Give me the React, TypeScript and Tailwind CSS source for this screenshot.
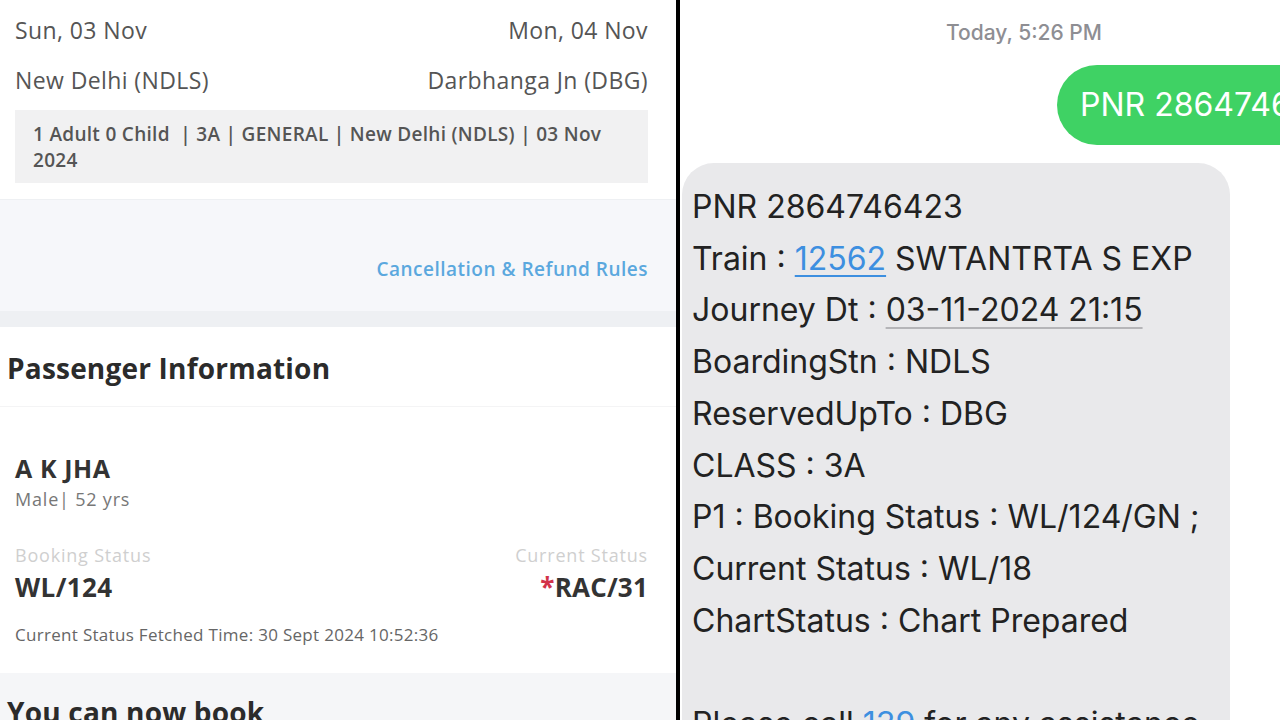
import React from 'react';

const openSans = { fontFamily: "'Open Sans', 'Noto Sans', sans-serif" };
const sfLike = { fontFamily: "Inter, Roboto, sans-serif" };

const smsLines: React.ReactNode[] = [
  'PNR 2864746423',
  <>
    Train : <span className="text-[#3d8fe0] underline decoration-[#3d8fe0] decoration-2 underline-offset-[5px]">12562</span> SWTANTRTA S EXP
  </>,
  <>
    Journey Dt : <span className="underline decoration-[#b5b5b8] decoration-2 underline-offset-[6px]">03-11-2024 21:15</span>
  </>,
  'BoardingStn : NDLS',
  'ReservedUpTo : DBG',
  'CLASS : 3A',
  'P1 : Booking Status : WL/124/GN ;',
  'Current Status : WL/18',
  'ChartStatus : Chart Prepared',
  '\u00a0',
  <>
    Please call <span className="text-[#3d8fe0]">139</span> for any assistance
  </>,
];

const TicketPanel: React.FC = () => (
  <div className="w-[676px] h-full shrink-0 flex flex-col bg-white overflow-hidden" style={openSans}>
    <div className="shrink-0 pl-[15px] pr-[28px] pt-[15px] pb-[16px] border-b border-[#eef0f3]">
      <div className="flex justify-between text-[23px] leading-[30px] tracking-[0.4px] text-[#555]">
        <span>Sun, 03 Nov</span>
        <span>Mon, 04 Nov</span>
      </div>
      <div className="flex justify-between text-[23px] leading-[30px] tracking-[0.4px] text-[#555] mt-[20px]">
        <span>New Delhi (NDLS)</span>
        <span>Darbhanga Jn (DBG)</span>
      </div>
      <div className="mt-[15px] bg-[#f1f1f2] pl-[18px] pr-[30px] pt-[11px] pb-[10px] text-[19px] leading-[26px] tracking-[0.3px] font-semibold text-[#555]">
        1 Adult 0 Child&nbsp; | 3A | GENERAL | New Delhi (NDLS) | 03 Nov 2024
      </div>
    </div>

    <div className="shrink-0 h-[111px] bg-[#f6f7fa] flex items-end justify-end pr-[28px] pb-[30px]">
      <span className="text-[19px] leading-[24px] tracking-[0.5px] font-semibold text-[#5ba8de]">Cancellation &amp; Refund Rules</span>
    </div>
    <div className="shrink-0 h-[16px] bg-[#eef0f3]" />

    <div className="shrink-0 bg-white">
      <div className="pl-[7px] pt-[24px] pb-[21px] border-b border-[#f4f4f5]">
        <h2 className="text-[28px] leading-[34px] tracking-[0.2px] font-bold text-[#2b2b2b]">Passenger Information</h2>
      </div>
      <div className="pl-[15px] pr-[28px] pt-[45px] pb-[26px]">
        <div className="text-[25px] leading-[32px] tracking-[0.6px] font-bold text-[#333]">A K JHA</div>
        <div className="text-[18px] leading-[26px] tracking-[0.8px] text-[#777] mt-[2px]">Male| 52 yrs</div>
        <div className="flex justify-between mt-[31px]">
          <div>
            <div className="text-[18px] leading-[24px] tracking-[0.8px] text-[#cfcfcf]">Booking Status</div>
            <div className="text-[26px] leading-[34px] tracking-[0.4px] font-bold text-[#333] mt-[3px]">WL/124</div>
          </div>
          <div className="text-right">
            <div className="text-[18px] leading-[24px] tracking-[0.8px] text-[#cfcfcf]">Current Status</div>
            <div className="text-[26px] leading-[34px] tracking-[0.2px] font-bold text-[#333] mt-[3px]">
              <span className="text-[#d2334a]">*</span>RAC/31
            </div>
          </div>
        </div>
        <div className="text-[17px] leading-[24px] tracking-[0.3px] text-[#666] mt-[19px]">
          Current Status Fetched Time: 30 Sept 2024 10:52:36
        </div>
      </div>
    </div>

    <div className="flex-1 bg-[#f5f6f8] pl-[7px] pt-[22px]">
      <h2 className="text-[28px] leading-[34px] tracking-[0.2px] font-bold text-[#2b2b2b] whitespace-nowrap">You can now book</h2>
    </div>
  </div>
);

const SmsPanel: React.FC = () => (
  <div className="flex-1 h-full bg-white overflow-hidden flex flex-col" style={sfLike}>
    <div className="shrink-0 text-center text-[21px] leading-[26px] font-medium text-[#8e8e93] pt-[20px] pl-[88px]">
      Today, 5:26 PM
    </div>
    <div className="shrink-0 mt-[19px] pl-[377px] flex">
      <div className="h-[80px] rounded-l-[40px] bg-[#3fd264] text-white text-[32px] font-normal flex items-center pl-[23px] pr-[60px] whitespace-nowrap shrink-0">
        PNR 2864746423
      </div>
    </div>
    <div className="mt-[18px] ml-[2px] w-[548px] flex-1 rounded-t-[32px] bg-[#e9e9eb] pl-[10px] pt-[18px] text-[32px] leading-[51.7px] text-[#222] whitespace-nowrap">
      {smsLines.map((line, i) => (
        <div key={i}>{line}</div>
      ))}
    </div>
  </div>
);

export default function App() {
  return (
    <div className="w-[1280px] h-[720px] flex overflow-hidden bg-white">
      <TicketPanel />
      <div className="w-[4px] h-full shrink-0 bg-black" />
      <SmsPanel />
    </div>
  );
}
